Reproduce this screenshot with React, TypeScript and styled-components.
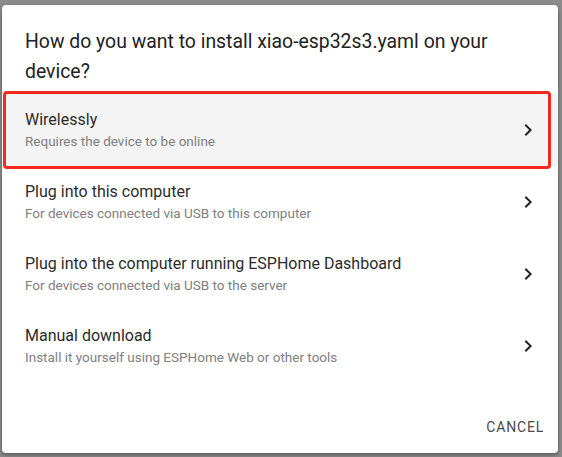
import React from "react";
import styled, { createGlobalStyle } from "styled-components";

const GlobalStyle = createGlobalStyle`
  html, body {
    margin: 0;
    padding: 0;
    background: #8b8b8b;
    font-family: Roboto, "Liberation Sans", sans-serif;
  }
`;

interface Option {
  title: string;
  subtitle: string;
  highlighted?: boolean;
}

const options: Option[] = [
  { title: "Wirelessly", subtitle: "Requires the device to be online", highlighted: true },
  { title: "Plug into this computer", subtitle: "For devices connected via USB to this computer" },
  {
    title: "Plug into the computer running ESPHome Dashboard",
    subtitle: "For devices connected via USB to the server",
  },
  { title: "Manual download", subtitle: "Install it yourself using ESPHome Web or other tools" },
];

const Backdrop = styled.div`
  width: 562px;
  height: 457px;
  padding: 5px 4px 4px 2px;
  box-sizing: border-box;
`;

const Dialog = styled.div`
  height: 448px;
  background: #fff;
  border-radius: 4px;
  box-shadow: 0 2px 4px rgba(0, 0, 0, 0.35);
  display: flex;
  flex-direction: column;
`;

const Title = styled.h2`
  margin: 0;
  padding: 22px 24px 0 23px;
  font-size: 19.4px;
  line-height: 30px;
  font-weight: 400;
  color: #222;
`;

const List = styled.div`
  margin-top: 7px;
  display: flex;
  flex-direction: column;
`;

const Row = styled.div<{ $highlighted?: boolean }>`
  position: relative;
  height: 72px;
  padding: 0 18px 0 23px;
  display: flex;
  align-items: center;
  background: ${(p) => (p.$highlighted ? "#f4f4f4" : "transparent")};

  ${(p) =>
    p.$highlighted &&
    `
    &::after {
      content: "";
      position: absolute;
      top: -3px;
      bottom: -3px;
      left: 1px;
      right: 7px;
      border: 3px solid #f42a1e;
      border-radius: 4px;
      pointer-events: none;
    }
  `}
`;

const RowText = styled.div`
  flex: 1;
  display: flex;
  flex-direction: column;
`;

const RowTitle = styled.span`
  font-size: 16px;
  line-height: 22px;
  color: #2b2b2b;
`;

const RowSubtitle = styled.span`
  font-size: 13.5px;
  line-height: 20px;
  color: #808080;
`;

const Chevron = styled.svg`
  width: 24px;
  height: 24px;
  fill: #222;
  flex-shrink: 0;
`;

const Actions = styled.div`
  margin-top: auto;
  padding: 8px 6px 8px 8px;
  display: flex;
  justify-content: flex-end;
`;

const CancelButton = styled.button`
  height: 36px;
  padding: 0 8px;
  border: none;
  background: none;
  font-family: inherit;
  font-size: 14px;
  font-weight: 400;
  letter-spacing: 0.8px;
  color: #4a4a4a;
  cursor: pointer;
`;

export default function App() {
  return (
    <>
      <GlobalStyle />
      <Backdrop>
        <Dialog>
          <Title>How do you want to install xiao-esp32s3.yaml on your device?</Title>
          <List>
            {options.map((o) => (
              <Row key={o.title} $highlighted={o.highlighted}>
                <RowText>
                  <RowTitle>{o.title}</RowTitle>
                  <RowSubtitle>{o.subtitle}</RowSubtitle>
                </RowText>
                <Chevron viewBox="0 0 24 24">
                  <path d="M10 6L8.59 7.41 13.17 12l-4.58 4.59L10 18l6-6z" />
                </Chevron>
              </Row>
            ))}
          </List>
          <Actions>
            <CancelButton>CANCEL</CancelButton>
          </Actions>
        </Dialog>
      </Backdrop>
    </>
  );
}
